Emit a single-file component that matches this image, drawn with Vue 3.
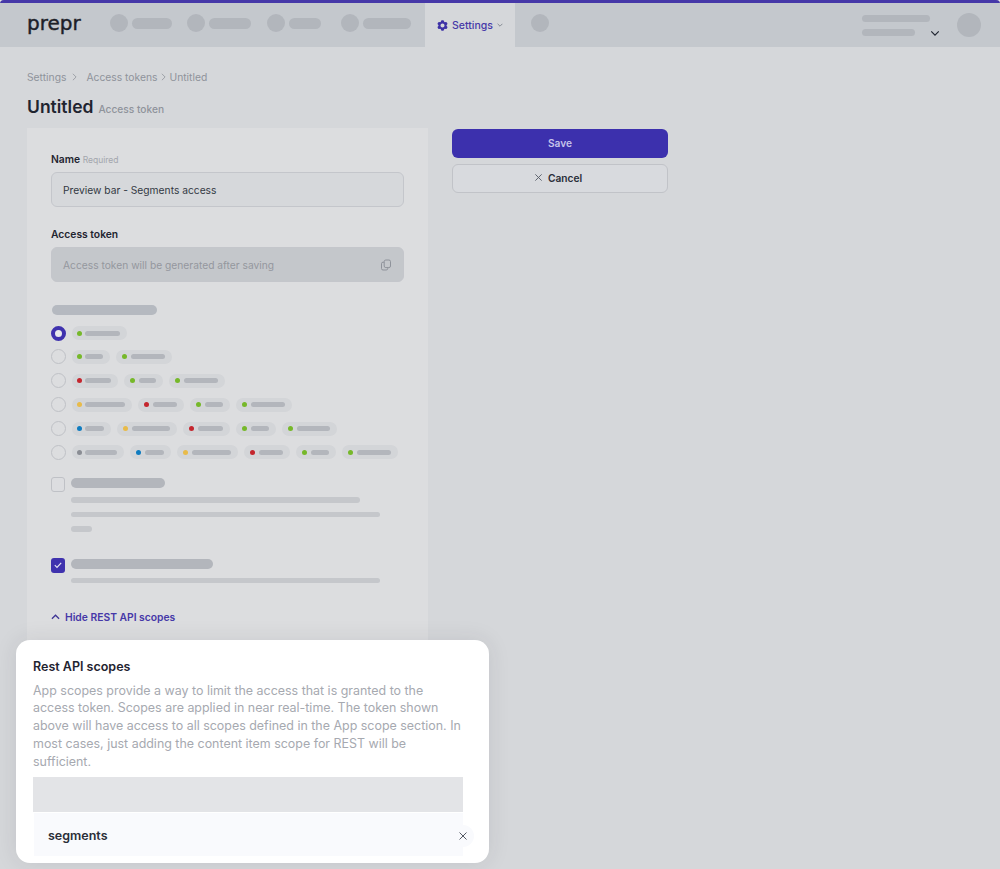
<template>
  <div class="page">
    <header class="topbar">
      <span class="logo">prepr</span>
      <nav class="nav">
        <div v-for="item in navItems" :key="item.w" class="nav-item" :style="{ marginLeft: item.gap + 'px' }">
          <span class="nav-dot"></span>
          <span class="nav-bar" :style="{ width: item.w + 'px' }"></span>
        </div>
      </nav>
      <div class="tab">
        <svg class="cog" viewBox="0 0 24 24"><path fill-rule="evenodd" d="M11.078 2.25c-.917 0-1.699.663-1.85 1.567L9.05 4.889c-.02.12-.115.26-.297.348a7.493 7.493 0 00-.986.57c-.166.115-.334.126-.45.083L6.3 5.508a1.875 1.875 0 00-2.282.819l-.922 1.597a1.875 1.875 0 00.432 2.385l.84.692c.095.078.17.229.154.43a7.598 7.598 0 000 1.139c.015.2-.059.352-.153.43l-.841.692a1.875 1.875 0 00-.432 2.385l.922 1.597a1.875 1.875 0 002.282.818l1.019-.382c.115-.043.283-.031.45.082.312.214.641.405.985.57.182.088.277.228.297.35l.178 1.071c.151.904.933 1.567 1.85 1.567h1.844c.916 0 1.699-.663 1.85-1.567l.178-1.072c.02-.12.114-.26.297-.349.344-.165.673-.356.985-.57.167-.114.335-.125.45-.082l1.02.382a1.875 1.875 0 002.28-.819l.923-1.597a1.875 1.875 0 00-.432-2.385l-.84-.692c-.095-.078-.17-.229-.154-.43a7.614 7.614 0 000-1.139c-.016-.2.059-.352.153-.43l.84-.692c.708-.582.891-1.59.433-2.385l-.922-1.597a1.875 1.875 0 00-2.282-.818l-1.02.382c-.114.043-.282.031-.449-.083a7.49 7.49 0 00-.985-.57c-.183-.087-.277-.227-.297-.348l-.179-1.072a1.875 1.875 0 00-1.85-1.567h-1.843zM12 15.75a3.75 3.75 0 100-7.5 3.75 3.75 0 000 7.5z"/></svg>
        <span>Settings</span>
        <svg class="tab-chevron" viewBox="0 0 10 6"><path d="M1 1l4 4 4-4"/></svg>
      </div>
      <span class="nav-dot extra"></span>
      <div class="account">
        <div class="account-lines">
          <span class="account-line first"></span>
          <span class="account-line second"></span>
        </div>
        <svg class="account-chevron" viewBox="0 0 12 8"><path d="M1.5 1.5L6 6l4.5-4.5"/></svg>
        <span class="avatar"></span>
      </div>
    </header>

    <main class="content">
      <div class="breadcrumb">
        <span>Settings</span>
        <svg class="crumb-sep first" viewBox="0 0 6 10"><path d="M1 1l4 4-4 4"/></svg>
        <span>Access tokens</span>
        <svg class="crumb-sep" viewBox="0 0 6 10"><path d="M1 1l4 4-4 4"/></svg>
        <span>Untitled</span>
      </div>
      <h1 class="title">Untitled <small>Access token</small></h1>

      <div class="columns">
        <section class="card">
          <label class="label">Name <em>Required</em></label>
          <div class="input">Preview bar - Segments access</div>

          <label class="label second">Access token</label>
          <div class="input disabled">
            <span>Access token will be generated after saving</span>
            <svg class="copy" viewBox="0 0 12 12"><rect x="4.2" y="1" width="6.3" height="7.6" rx="1.6"/><path d="M4.2 3.2H3A1.5 1.5 0 001.5 4.7v4.8A1.5 1.5 0 003 11h3.2a1.5 1.5 0 001.5-1.5v-.9"/></svg>
          </div>

          <div class="section-bar"></div>
          <div class="radios">
            <div v-for="(row, i) in pillRows" :key="i" class="radio-row">
              <span class="radio" :class="{ checked: i === 0 }"></span>
              <span v-for="(pill, j) in row" :key="j" class="pill" :style="{ width: pill.w + 'px' }">
                <span class="pill-dot" :style="{ background: colors[pill.c] }"></span>
                <span class="pill-bar"></span>
              </span>
            </div>
          </div>

          <div class="check-row">
            <span class="check"></span>
            <div class="check-body">
              <div class="check-title" style="width: 94px"></div>
              <div class="check-line" style="width: 289px"></div>
              <div class="check-line" style="width: 309px"></div>
              <div class="check-line" style="width: 21px"></div>
            </div>
          </div>
          <div class="check-row last">
            <span class="check on">
              <svg viewBox="0 0 14 14"><path d="M3.8 7.2l2.2 2.2 4.2-4.6"/></svg>
            </span>
            <div class="check-body">
              <div class="check-title" style="width: 142px"></div>
              <div class="check-line" style="width: 309px"></div>
            </div>
          </div>

          <div class="toggle">
            <svg viewBox="0 0 10 6"><path d="M1 5l4-4 4 4"/></svg>
            <span>Hide REST API scopes</span>
          </div>
        </section>

        <aside class="actions">
          <button class="btn primary">Save</button>
          <button class="btn ghost">
            <svg viewBox="0 0 10 10"><path d="M1.5 1.5l7 7M8.5 1.5l-7 7"/></svg>
            Cancel
          </button>
        </aside>
      </div>
    </main>

    <div class="popup">
      <h2>Rest API scopes</h2>
      <p>App scopes provide a way to limit the access that is granted to the access token. Scopes are applied in near real-time. The token shown above will have access to all scopes defined in the App scope section. In most cases, just adding the content item scope for REST will be sufficient.</p>
      <div class="popup-block"></div>
      <div class="popup-row">
        <span>segments</span>
        <span class="popup-close">
          <svg viewBox="0 0 10 10"><path d="M1.5 1.5l7 7M8.5 1.5l-7 7"/></svg>
        </span>
      </div>
    </div>
  </div>
</template>

<script setup>
const navItems = [
  { w: 40, gap: 0 },
  { w: 42, gap: 15 },
  { w: 32, gap: 16 },
  { w: 48, gap: 20 }
]

const colors = {
  g: '#76b82a',
  r: '#c4262e',
  y: '#e8bb4a',
  b: '#0f7cc0',
  n: '#8a8d94'
}

const pillRows = [
  [{ c: 'g', w: 55 }],
  [{ c: 'g', w: 38 }, { c: 'g', w: 56 }],
  [{ c: 'r', w: 46 }, { c: 'g', w: 39 }, { c: 'g', w: 56 }],
  [{ c: 'y', w: 60 }, { c: 'r', w: 46 }, { c: 'g', w: 40 }, { c: 'g', w: 56 }],
  [{ c: 'b', w: 39 }, { c: 'y', w: 60 }, { c: 'r', w: 47 }, { c: 'g', w: 40 }, { c: 'g', w: 55 }],
  [{ c: 'n', w: 52 }, { c: 'b', w: 41 }, { c: 'y', w: 61 }, { c: 'r', w: 46 }, { c: 'g', w: 40 }, { c: 'g', w: 56 }]
]
</script>

<style>
html, body {
  margin: 0;
  background: #e4e5e7;
}
</style>

<style scoped>
* {
  box-sizing: border-box;
}

.page {
  position: relative;
  width: 1000px;
  height: 869px;
  overflow: hidden;
  border-radius: 4px 4px 0 0;
  background: #d5d7da;
  font-family: Inter, "Liberation Sans", sans-serif;
  color: #1f2430;
}

.topbar {
  display: flex;
  align-items: stretch;
  height: 47px;
  border-top: 3px solid #4638a8;
  background: #c4c8cd;
}

.logo {
  width: 83px;
  margin-left: 27px;
  font-family: "DejaVu Sans", sans-serif;
  font-size: 20px;
  line-height: 40px;
  font-weight: 400;
  color: #1c2028;
  -webkit-text-stroke: 0.4px #1c2028;
}

.nav {
  display: flex;
  align-items: center;
  margin-top: -4px;
  width: 315px;
}

.nav-item {
  display: flex;
  align-items: center;
  gap: 4px;
}

.nav-dot {
  display: block;
  flex: none;
  width: 18px;
  height: 18px;
  border-radius: 50%;
  background: #b2b6bc;
}

.nav-bar {
  height: 11px;
  border-radius: 6px;
  background: #b2b6bc;
}

.tab {
  display: flex;
  align-items: center;
  width: 90px;
  padding: 0 0 0 11px;
  background: #d5d7da;
  color: #4638a8;
  font-size: 10.5px;
  font-weight: 500;
}

.cog {
  width: 13px;
  height: 13px;
  margin-right: 3px;
  fill: #3d31a6;
}

.tab-chevron {
  width: 6px;
  height: 4px;
  margin-left: 4px;
  fill: none;
  stroke: #6a6f7a;
  stroke-width: 1.2;
}

.nav-dot.extra {
  align-self: center;
  margin-left: 16px;
  margin-top: -4px;
}

.account {
  display: flex;
  align-items: flex-start;
  margin-left: auto;
  padding-top: 10px;
  padding-right: 19px;
}

.account-lines {
  display: flex;
  flex-direction: column;
  gap: 7px;
  width: 68px;
  padding-top: 2px;
}

.account-line {
  display: block;
  height: 7px;
  border-radius: 4px;
  background: #b2b6bc;
}

.account-line.first {
  width: 68px;
}

.account-line.second {
  width: 53px;
}

.account-chevron {
  width: 10px;
  height: 7px;
  margin: 17px -1px 0 0;
  fill: none;
  stroke: #1f2430;
  stroke-width: 1.4;
}

.avatar {
  width: 24px;
  height: 24px;
  margin-left: 18px;
  border-radius: 50%;
  background: #b2b6bc;
}

.content {
  padding: 23px 0 0 27px;
}

.breadcrumb {
  display: flex;
  align-items: center;
  height: 14px;
  font-size: 10.3px;
  line-height: 14px;
  color: #8f939b;
}

.crumb-sep {
  width: 5px;
  height: 8px;
  margin: 0 3px 0 4px;
  fill: none;
  stroke: #8f939b;
  stroke-width: 1;
}

.crumb-sep.first {
  margin: 0 9px 0 6px;
}

.title {
  display: flex;
  align-items: baseline;
  gap: 5px;
  margin: 11px 0 0;
  height: 33px;
  font-size: 17.5px;
  line-height: 24px;
  font-weight: 600;
}

.title small {
  font-size: 10.2px;
  font-weight: 500;
  color: #8f939b;
}

.columns {
  display: flex;
  gap: 24px;
}

.card {
  width: 401px;
  height: 520px;
  padding: 24px 24px 0;
  background: #dcdddf;
}

.label {
  display: block;
  font-size: 10.3px;
  line-height: 15px;
  font-weight: 600;
  color: #1f2430;
}

.label.second {
  margin-top: 20px;
}

.label em {
  font-style: normal;
  font-size: 8.5px;
  font-weight: 400;
  color: #a3a6ad;
}

.input {
  display: flex;
  align-items: center;
  justify-content: space-between;
  width: 353px;
  height: 35px;
  margin-top: 4px;
  padding: 0 11px 0 11px;
  border: 1px solid #c4c6cb;
  border-radius: 6px;
  background: #d6d8db;
  font-size: 10.25px;
  color: #333843;
}

.input.disabled {
  margin-top: 5px;
  background: #c4c7cb;
  color: #94979e;
}

.copy {
  width: 12px;
  height: 12px;
  fill: none;
  stroke: #8f939b;
  stroke-width: 1;
}

.section-bar {
  width: 105px;
  height: 10px;
  margin: 23px 0 0 1px;
  border-radius: 5px;
  background: #b5b9c0;
}

.radios {
  display: flex;
  flex-direction: column;
  gap: 9.9px;
  margin-top: 11px;
}

.radio-row {
  display: flex;
  align-items: center;
  gap: 6px;
  height: 14px;
}

.radio {
  flex: none;
  width: 15px;
  height: 15px;
  border: 1px solid #bfc1c6;
  border-radius: 50%;
}

.radio.checked {
  border: 4px solid #3f32ae;
  background: #e8e9eb;
}

.pill {
  display: flex;
  align-items: center;
  height: 14px;
  padding: 0 7px 0 6px;
  border-radius: 7px;
  background: #d3d5d8;
}

.pill-dot {
  flex: none;
  width: 5px;
  height: 5px;
  border-radius: 50%;
}

.pill-bar {
  flex: 1;
  height: 5px;
  margin-left: 4px;
  border-radius: 3px;
  background: #b3b6bc;
}

.radio + .pill {
  padding-left: 5px;
}

.radio + .pill .pill-bar {
  margin-left: 3px;
}

.check-row {
  display: flex;
  gap: 6px;
  margin-top: 18px;
}

.check-row.last {
  margin-top: 26px;
}

.check {
  flex: none;
  display: flex;
  width: 14px;
  height: 15px;
  border: 1px solid #bfc1c6;
  border-radius: 3px;
  background: #dcdde0;
}

.check.on {
  border: 0;
  background: #3f32ae;
}

.check.on svg {
  width: 14px;
  height: 14px;
  fill: none;
  stroke: #e5e4f4;
  stroke-width: 1.2;
}

.check-body {
  padding-top: 1px;
}

.check-title {
  height: 10px;
  border-radius: 5px;
  background: #b3b6bc;
}

.check-line {
  height: 5.5px;
  margin-top: 9px;
  border-radius: 3px;
  background: #c5c7cb;
}

.toggle {
  display: flex;
  align-items: center;
  gap: 5px;
  margin-top: 27px;
  font-size: 10.3px;
  line-height: 14px;
  font-weight: 600;
  color: #4638a8;
}

.toggle svg {
  width: 9px;
  height: 6px;
  fill: none;
  stroke: #3f3595;
  stroke-width: 1.4;
}

.actions {
  display: flex;
  flex-direction: column;
  gap: 6px;
  width: 216px;
  margin-top: 1px;
}

.btn {
  display: flex;
  align-items: center;
  justify-content: center;
  gap: 5px;
  height: 29px;
  padding: 0 0 1px;
  border-radius: 6px;
  font-family: inherit;
  font-size: 10.2px;
  font-weight: 600;
}

.btn.primary {
  border: 0;
  background: #3c30ad;
  color: #c5c2ea;
}

.btn.ghost {
  padding: 0 4px 2px 0;
  border: 1px solid #c1c3c8;
  background: #d8dade;
  color: #2a2e38;
}

.btn.ghost svg {
  width: 9px;
  height: 9px;
  fill: none;
  stroke: #555a65;
  stroke-width: 1;
}

.popup {
  position: absolute;
  left: 16px;
  top: 640px;
  width: 473px;
  height: 223px;
  padding: 19px 26px 0 17px;
  border-radius: 14px;
  background: #fff;
  box-shadow: 0 0 22px rgba(40, 44, 52, 0.1);
}

.popup h2 {
  margin: 0;
  font-size: 12.5px;
  line-height: 16px;
  font-weight: 600;
  color: #1f2430;
}

.popup p {
  margin: 6.5px 0 0;
  font-size: 12.44px;
  line-height: 17.8px;
  color: #a6a9b0;
}

.popup-block {
  height: 35px;
  margin-top: 6.5px;
  background: #e3e4e7;
}

.popup-row {
  display: flex;
  align-items: center;
  justify-content: space-between;
  height: 43px;
  margin: 1px 0 0 1px;
  padding: 3px 0 0 14px;
  background: #f9fafd;
  font-size: 12.5px;
  font-weight: 600;
  color: #2a2e38;
}

.popup-close {
  display: flex;
  align-items: center;
  justify-content: center;
  width: 22px;
  height: 22px;
  margin-right: -11px;
  border-radius: 50%;
  background: #f9fafd;
}

.popup-close svg {
  width: 10px;
  height: 10px;
  fill: none;
  stroke: #555a65;
  stroke-width: 1;
}
</style>
